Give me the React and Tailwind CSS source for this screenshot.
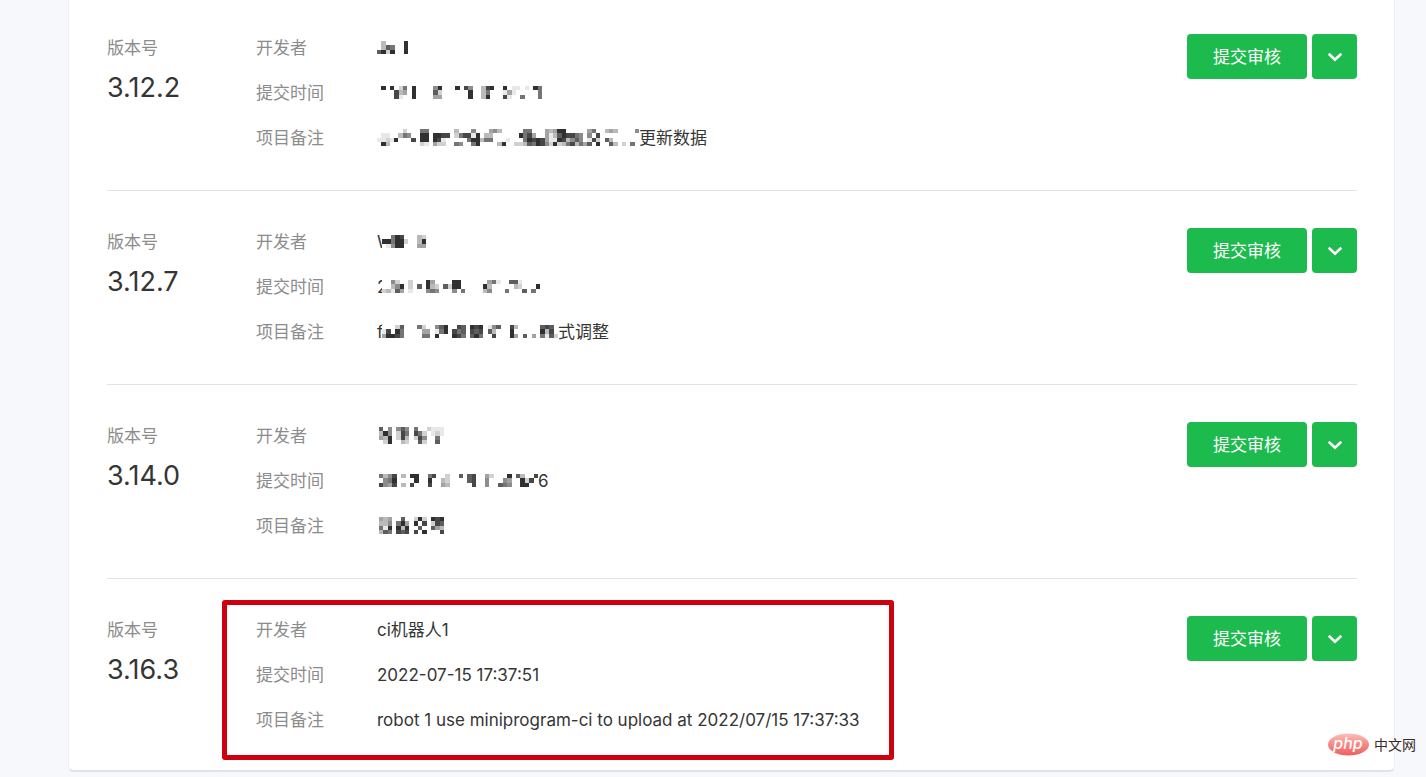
const CELL = 10;

// Each row lists runs of cells as "column:levels", one digit per cell, 9 being darkest.
function Mosaic({ rows, cols, width }) {
  const cells = [];
  rows.forEach((row, y) => {
    row.split(" ").forEach((run) => {
      const [start, levels] = run.split(":");
      levels.split("").forEach((level, i) => {
        cells.push({ x: Number(start) + i, y, level: Number(level) });
      });
    });
  });
  return (
    <svg
      aria-hidden="true"
      width={width}
      height={rows.length === 4 ? 17 : 13}
      viewBox={`0 0 ${cols * CELL} ${rows.length * CELL}`}
      preserveAspectRatio="none"
      shapeRendering="crispEdges"
      className="relative shrink-0 bg-white"
    >
      {cells.map(({ x, y, level }) => {
        const v = 255 - level * 23;
        return (
          <rect
            key={`${x}-${y}`}
            x={x * CELL}
            y={y * CELL}
            width={CELL}
            height={CELL}
            fill={`rgb(${v},${v},${v})`}
          />
        );
      })}
    </svg>
  );
}

const versions = [
  {
    version: "3.12.2",
    developer: {
      mosaic: { cols: 7, width: 31, rows: ["1:3 6:9", "1:376 6:9", "0:7929 6:9"] },
    },
    time: {
      mosaic: {
        cols: 38,
        width: 165,
        rows: [
          "1:9 3:9 5:26 8:9 13:59 18:9 20:85 24:389 29:9 31:11 34:1 36:96",
          "4:834 8:9 13:72 21:9 24:36 29:141 37:6",
          "4:81 8:9 13:44 21:9 24:39 29:81 33:6 37:6",
        ],
      },
    },
    note: {
      mosaic: {
        cols: 61,
        width: 262,
        rows: [
          "6:2 10:66 18:3 22:5 26:453 34:66 39:43499 49:46 53:343 60:5",
          "1:11 5:365 10:99 13:9988 18:2688 22:19 25:33 33:9684 39:413798865 49:5 51:8",
          "0:1121 4:9 8:8 10:99 13:981 21:69936 26:6 30:1 34:6989841198 44:3575 49:182 53:73",
          "1:93 10:21 13:422 18:65 22:69 28:39 32:2237698529236836 48:47 51:9 54:73 57:2 59:6",
        ],
      },
      suffix: "更新数据",
    },
  },
  {
    version: "3.12.7",
    developer: {
      prefix: "W",
      mosaic: {
        cols: 10,
        width: 44,
        rows: ["2:698 8:32", "0:996992 8:39", "1:1599 8:44"],
      },
    },
    time: {
      prefix: "2",
      mosaic: {
        cols: 36,
        width: 158,
        rows: [
          "2:52 6:2 10:94 16:99 24:46 26:1 29:771",
          "2:359 6:2 8:7 10:932 14:7299 23:93 30:32 35:9",
          "0:23174 6:1 10:565 16:5 18:6 23:35 28:6 32:7 34:6",
        ],
      },
    },
    note: {
      prefix: "f",
      mosaic: {
        cols: 40,
        width: 176,
        rows: [
          "3:27 8:62 12:579 17:87 20:989 24:157 29:83 36:787",
          "0:18 3:96 9:44 12:169 16:867 20:878 24:73 29:9 36:938",
          "0:49986 9:66 12:9 16:986 20:796 25:8 29:94 32:7 34:4 36:6172",
        ],
      },
      suffix: "式调整",
    },
  },
  {
    version: "3.14.0",
    developer: {
      inset: true,
      mosaic: {
        cols: 15,
        width: 65,
        rows: [
          "0:7 2:5 4:575 8:6 11:2 12:111",
          "0:395 4:286 8:862 12:121",
          "0:439 4:283 8:285 13:6",
          "1:29 5:32 9:72 13:7",
        ],
      },
    },
    time: {
      inset: true,
      mosaic: {
        cols: 36,
        width: 159,
        rows: [
          "0:6358 5:3 7:99 11:68 15:2 18:7 20:78 24:42 29:9 31:73 35:8",
          "1:569 8:9 11:9 14:32 20:78 24:5 28:54 32:928",
          "0:8548 5:3 7:8 11:8 14:43 21:8 24:5 27:765 32:99",
        ],
      },
      suffix: "6",
    },
    note: {
      inset: true,
      mosaic: {
        cols: 15,
        width: 65,
        rows: [
          "0:434 5:7 8:29 10:2 12:989",
          "0:335 4:694 8:9 10:8 12:287",
          "0:619 4:939 9:7 12:743",
          "0:376 4:878 8:8 10:9 14:8",
        ],
      },
    },
  },
  {
    version: "3.16.3",
    highlighted: true,
    developer: { text: "ci机器人1" },
    time: { text: "2022-07-15 17:37:51" },
    note: { text: "robot 1 use miniprogram-ci to upload at 2022/07/15 17:37:33" },
  },
];

function Value({ value }) {
  if (value.text) return <>{value.text}</>;
  return (
    <>
      {value.prefix && <span className="w-[5px] shrink-0">{value.prefix}</span>}
      <Mosaic {...value.mosaic} />
      {value.suffix && <span>{value.suffix}</span>}
    </>
  );
}

function Field({ label, value }) {
  return (
    <div className="flex h-[45px] items-center">
      <dt className="w-[121px] shrink-0 text-[#8c8c8c]">{label}</dt>
      <dd
        className={`flex items-center whitespace-nowrap text-[#353535] ${value.inset ? "pl-0.5" : ""}`}
      >
        <Value value={value} />
      </dd>
    </div>
  );
}

function VersionRow({ item }) {
  return (
    <li className="flex items-start border-b border-[#e2e3e5] pt-[28px] pb-[30px] first:pt-[25px] last:border-b-0 last:pb-[28px]">
      <div className="w-[149px] shrink-0">
        <div className="flex h-[45px] items-center text-[#8c8c8c]">版本号</div>
        <div className="text-[27px] leading-9 text-[#353535]">{item.version}</div>
      </div>
      <dl className="relative">
        <Field label="开发者" value={item.developer} />
        <Field label="提交时间" value={item.time} />
        <Field label="项目备注" value={item.note} />
        {item.highlighted && (
          <div className="pointer-events-none absolute -top-[7px] -right-[34px] -bottom-[18px] -left-[34px] rounded-[3px] border-5 border-[#cd0010]" />
        )}
      </dl>
      <div className="mt-[9px] ml-auto flex gap-[5px] text-white">
        <button type="button" className="h-[45px] w-[120px] rounded bg-[#1dba4e]">
          提交审核
        </button>
        <button
          type="button"
          aria-label="更多操作"
          className="flex h-[45px] w-[45px] items-center justify-center rounded bg-[#1dba4e]"
        >
          <svg width="16" height="10" viewBox="0 0 16 10" fill="none" aria-hidden="true">
            <path d="M1.7 1.8l6.3 6 6.3-6" stroke="currentColor" strokeWidth="2.6" />
          </svg>
        </button>
      </div>
    </li>
  );
}

function Watermark() {
  return (
    <div className="absolute right-[10px] bottom-[21px] flex items-center gap-[5px]">
      <svg width="41" height="23" viewBox="0 0 41 23" role="img" aria-label="php">
        <defs>
          <linearGradient id="badge" x1="0" y1="0" x2="0" y2="1">
            <stop offset="0" stopColor="#fac0bc" />
            <stop offset="0.5" stopColor="#f68884" />
            <stop offset="1" stopColor="#f1605f" />
          </linearGradient>
        </defs>
        <ellipse cx="20.5" cy="11.5" rx="20.5" ry="11" fill="url(#badge)" />
        <text
          x="20"
          y="16"
          textAnchor="middle"
          fill="#fff"
          fontFamily="Inter, sans-serif"
          fontSize="16"
          fontStyle="italic"
          fontWeight="500"
        >
          php
        </text>
      </svg>
      <span className="text-[14px] leading-5 text-[#3b2a2a]">中文网</span>
    </div>
  );
}

export default function App() {
  return (
    <div className="relative min-h-screen bg-[#f7f8fb] pr-[31px] pb-[5px] pl-[68px] font-[Inter,'Noto_Sans_CJK_SC',sans-serif] text-[17px] leading-6">
      <main className="rounded-b-md border-x border-b-2 border-x-[#eeeff2] border-b-[#e2e3e6] bg-white pr-[37px] pl-[38px]">
        <ul>
          {versions.map((item) => (
            <VersionRow key={item.version} item={item} />
          ))}
        </ul>
      </main>
      <Watermark />
    </div>
  );
}
